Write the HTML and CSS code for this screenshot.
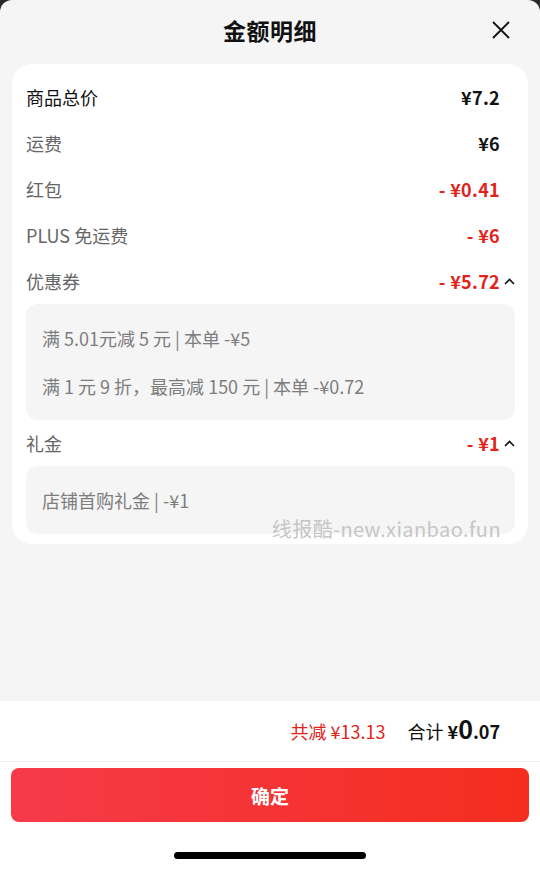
FILE: index.html
```html
<!DOCTYPE html>
<html lang="zh-CN">
<head>
  <meta charset="UTF-8">
  <title>金额明细</title>
  <link rel="stylesheet" href="styles.css">
</head>
<body>
  <div class="sheet">
    <div class="header">
      <h1>金额明细</h1>
      <span class="close">
        <svg width="18" height="18" viewBox="0 0 18 18"><path d="M1 1L17 17M17 1L1 17" stroke="#111" stroke-width="1.8" fill="none"/></svg>
      </span>
    </div>

    <div class="card">
      <div class="row">
        <span class="label dark">商品总价</span>
        <span class="right"><span class="value">¥7.2</span><span class="chev"></span></span>
      </div>
      <div class="row">
        <span class="label">运费</span>
        <span class="right"><span class="value">¥6</span><span class="chev"></span></span>
      </div>
      <div class="row">
        <span class="label">红包</span>
        <span class="right"><span class="value red">- ¥0.41</span><span class="chev"></span></span>
      </div>
      <div class="row">
        <span class="label">PLUS 免运费</span>
        <span class="right"><span class="value red">- ¥6</span><span class="chev"></span></span>
      </div>
      <div class="row">
        <span class="label">优惠券</span>
        <span class="right"><span class="value red">- ¥5.72</span><span class="chev"><svg width="11" height="7" viewBox="0 0 11 7"><path d="M1 6L5.5 1.5L10 6" stroke="#111" stroke-width="1.6" fill="none"/></svg></span></span>
      </div>
      <div class="detail">
        <div class="line">满 5.01元减 5 元 | 本单 -¥5</div>
        <div class="line">满 1 元 9 折，最高减 150 元 | 本单 -¥0.72</div>
      </div>
      <div class="row">
        <span class="label">礼金</span>
        <span class="right"><span class="value red">- ¥1</span><span class="chev"><svg width="11" height="7" viewBox="0 0 11 7"><path d="M1 6L5.5 1.5L10 6" stroke="#111" stroke-width="1.6" fill="none"/></svg></span></span>
      </div>
      <div class="detail">
        <div class="line">店铺首购礼金 | -¥1</div>
      </div>
      <div class="watermark">线报酷-new.xianbao.fun</div>
    </div>

    <div class="spacer"></div>

    <div class="footer">
      <div class="summary">
        <span class="saved">共减 ¥13.13</span><span class="total">合计 <b>¥<span class="big">0</span>.07</b></span>
      </div>
      <button class="confirm">确定</button>
      <div class="home-bar"></div>
    </div>
  </div>
</body>
</html>
```

FILE: styles.css
```css
body { margin: 0; background: #2a2a2a; font-family: "Noto Sans CJK SC", "Noto Sans", sans-serif; }
.sheet { height: 870px; background: #f5f5f5; border-radius: 12px 12px 0 0; display: flex; flex-direction: column; overflow: hidden; }

.header { height: 60px; position: relative; display: flex; align-items: center; justify-content: center; flex-shrink: 0; }
.header h1 { margin: 0; font-size: 23px; font-weight: 700; color: #111; letter-spacing: 0.5px; }
.close { position: absolute; right: 30px; top: 21px; width: 18px; height: 18px; }
.close svg { display: block; }

.card { position: relative; margin: 4px 12px 0; background: #fff; border-radius: 20px; padding: 10px 13px 10px 14px; }
.row { height: 46px; display: flex; align-items: center; justify-content: space-between; font-size: 18px; }
.label { color: #666; }
.label.dark { color: #111; }
.right { display: flex; align-items: center; }
.value { font-weight: 700; color: #111; font-size: 18px; letter-spacing: 0.3px; }
.value.red { color: #e2231a; }
.chev { width: 15px; display: flex; justify-content: flex-end; }
.chev svg { display: block; }

.detail { background: #f5f5f5; border-radius: 12px; padding: 10px 16px; }
.detail .line { height: 48px; line-height: 48px; font-size: 18px; color: #7d7d7d; }

.watermark { position: absolute; right: 27px; bottom: 1px; font-size: 20px; letter-spacing: 0.4px; color: #c6c6c6; }

.spacer { flex: 1; }

.footer { background: #fff; height: 169px; flex-shrink: 0; }
.summary { height: 61px; box-sizing: border-box; padding: 15px 40px 0 0; border-bottom: 1px solid #f0f0f0; display: flex; align-items: baseline; justify-content: flex-end; font-size: 18px; line-height: 1; }
.saved { color: #e2231a; margin-right: 22px; }
.total { color: #111; }
.total b { font-weight: 700; }
.big { font-size: 25px; line-height: 1; }
.confirm { display: block; width: 518px; height: 54px; margin: 6px 11px 0; border: none; border-radius: 8px; background: linear-gradient(90deg, #f63a4a, #f42d1e); color: #fff; font-size: 19px; font-weight: 700; font-family: inherit; }
.home-bar { width: 192px; height: 7px; border-radius: 4px; background: #000; margin: 30px auto 0; }
```
